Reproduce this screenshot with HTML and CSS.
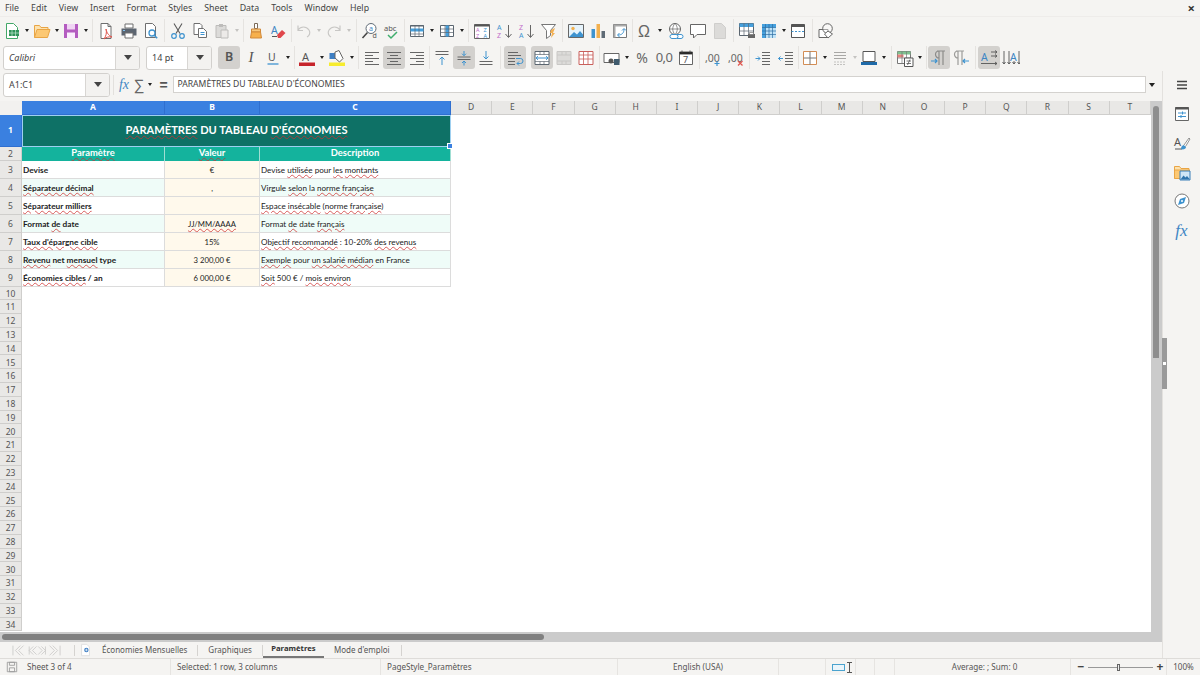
FILE: index.html
```html
<!DOCTYPE html>
<html lang="fr">
<head>
<meta charset="utf-8">
<title>Paramètres</title>
<link rel="stylesheet" href="styles.css">
</head>
<body>
<header class="menu">
  <span>File</span><span>Edit</span><span>View</span><span>Insert</span><span>Format</span><span>Styles</span><span>Sheet</span><span>Data</span><span>Tools</span><span>Window</span><span>Help</span>
  <span class="close">×</span>
</header>

<div class="tb">
  <span class="t"><svg viewBox="0 0 18 18"><path d="M3.5 1.5h7l4 4v11h-11z" fill="#fff" stroke="#43a868"/><path d="M6 8h10v6H6z" fill="#2f9259"/><path d="M9 8v6M12.5 8v6M6 11h10" stroke="#bfe6cd" stroke-width=".7"/></svg></span><span class="a"></span>
  <span class="t"><svg viewBox="0 0 18 18"><path d="M1.5 15.5v-12h5l1.500 2h7v2" fill="#fde2ae" stroke="#e9a545"/><path d="M1.500 15.500l2.500-8h13l-2.500 8z" fill="#fcc873" stroke="#e9a545"/></svg></span><span class="a a7"></span>
  <span class="t"><svg viewBox="0 0 18 18"><path d="M2 2h14v14H2z" fill="#b45cc0"/><path d="M5 2h8v5.500H5z" fill="#f0d5f4"/><path d="M5 10.500h8V16H5z" fill="#fbeefd"/></svg></span><span class="a"></span>
  <span class="sep s5"></span>
  <span class="t"><svg viewBox="0 0 18 18"><path d="M4 1.500h7l3 3v12H4z" fill="#fff" stroke="#6f6f6f"/><path d="M11 1.500v3h3" fill="none" stroke="#6f6f6f"/><path d="M9 7c1 4 2 6 6 8-3-.5-6 0-8 2 2-3 3-6 2-10z" fill="none" stroke="#e0554d"/></svg></span>
  <span class="t g1"><svg viewBox="0 0 18 18"><path d="M5 2h8v4H5z" fill="#fff" stroke="#6f6f6f"/><path d="M1.500 6.500h15v7h-15z" fill="#5c6570"/><path d="M5 11h8v5H5z" fill="#fff" stroke="#6f6f6f"/><path d="M3 8.500h2" stroke="#7fc1ee"/></svg></span>
  <span class="t"><svg viewBox="0 0 18 18"><path d="M3.500 1.500h7l3 3v11h-10z" fill="#fff" stroke="#6f6f6f"/><circle cx="10" cy="11" r="3" fill="#fff" stroke="#3e93cf" stroke-width="1.300"/><path d="M12.200 13.200l3 3" stroke="#3e93cf" stroke-width="1.500"/></svg></span>
  <span class="sep s5"></span>
  <span class="t"><svg viewBox="0 0 18 18"><path d="M5 1.500l6 10M13 1.500l-6 10" stroke="#5a5a5a" stroke-width="1.100"/><circle cx="5" cy="14" r="2.300" fill="none" stroke="#3e93cf" stroke-width="1.200"/><circle cx="13" cy="14" r="2.300" fill="none" stroke="#3e93cf" stroke-width="1.200"/></svg></span>
  <span class="t"><svg viewBox="0 0 18 18"><path d="M3 1.500h6l2 2v9H3z" fill="#fff" stroke="#6f6f6f"/><path d="M7.500 6.500h5l3 3v6h-8z" fill="#fff" stroke="#6f6f6f"/><path d="M9.500 10.500h4M9.500 12.500h4" stroke="#3e93cf"/></svg></span>
  <span class="t"><svg viewBox="0 0 18 18"><path d="M3 3.500h10v12H3z" fill="#dcdbd9" stroke="#bdbcba"/><path d="M6 2h4v3H6z" fill="#bdbcba"/><path d="M8 8h7v8H8z" fill="#eceae8" stroke="#bdbcba"/></svg></span><span class="a d"></span>
  <span class="sep s4"></span>
  <span class="t"><svg viewBox="0 0 18 18"><path d="M7.500 1.500h3v5h-3z" fill="#fff" stroke="#7a6a58"/><path d="M4.500 7h9v3h-9z" fill="#f7c77c" stroke="#d1893b"/><path d="M4.500 10h9l1 6h-11z" fill="#f6b04d" stroke="#d1893b"/></svg></span>
  <span class="t"><svg viewBox="0 0 18 18"><text x="2" y="12" class="svgt sb" fill="#3e86c4">A</text><path d="M3 14.500h5" stroke="#555"/><path d="M8 13l5-5 3.500 3-5 5H9z" fill="#e0474c"/></svg></span>
  <span class="sep s4"></span>
  <span class="t"><svg viewBox="0 0 18 18"><path d="M3 8c3-4 8-4 11 0 2 3 0 6-2 7M3 3.500V8.500h5" fill="none" stroke="#c8c7c5" stroke-width="1.200"/></svg></span><span class="a d"></span>
  <span class="t"><svg viewBox="0 0 18 18"><path d="M15 8c-3-4-8-4-11 0-2 3 0 6 2 7M15 3.500V8.500h-5" fill="none" stroke="#c8c7c5" stroke-width="1.200"/></svg></span><span class="a d"></span>
  <span class="sep s6"></span>
  <span class="t"><svg viewBox="0 0 18 18"><circle cx="10" cy="6.500" r="5" fill="#fff" stroke="#5f6b76"/><text x="8" y="9" class="svgt sx" fill="#3e86c4">a</text><path d="M6.500 10.500L1.500 16" stroke="#444" stroke-width="1.500"/><text x="11.500" y="16" class="svgt sx" fill="#555">d</text></svg></span>
  <span class="t"><svg viewBox="0 0 18 18"><text x="1" y="8.500" class="svgt sabc" fill="#555">abc</text><path d="M5 13l3 3 6-6" fill="none" stroke="#3fae6d" stroke-width="1.500"/></svg></span>
  <span class="sep s3"></span>
  <span class="t"><svg viewBox="0 0 18 18"><path d="M2.500 3.500h13v11h-13z" fill="#fff" stroke="#5b6670"/><path d="M2.500 6.500h13v3h-13z" fill="#46a0dd"/><path d="M2.500 3h13v1.500h-13z" fill="#5b6670"/><path d="M2.500 12h13M7 3.500v11M11 3.500v11" stroke="#5b6670" stroke-width=".7"/></svg></span><span class="a"></span>
  <span class="t"><svg viewBox="0 0 18 18"><path d="M2.500 3.500h13v11h-13z" fill="#fff" stroke="#5b6670"/><path d="M7.500 3.500h3.500v11H7.500z" fill="#46a0dd"/><path d="M2.500 7h13M2.500 10.500h13M7 3.500v11M11 3.500v11" stroke="#5b6670" stroke-width=".7"/></svg></span><span class="a"></span>
  <span class="sep s5"></span>
  <span class="t"><svg viewBox="0 0 18 18"><path d="M1.500 2.500h15v14h-15z" fill="#fff" stroke="#666"/><path d="M1.500 2.500h15v2h-15z" fill="#555"/><text x="3" y="10" class="svgt sxs" fill="#c06cc9">A</text><text x="10.500" y="10" class="svgt sxs" fill="#3e93cf">Z</text><text x="3" y="16" class="svgt sxs" fill="#c06cc9">Z</text><text x="10.500" y="16" class="svgt sxs" fill="#3e93cf">A</text></svg></span>
  <span class="t g1"><svg viewBox="0 0 18 18"><text x="1" y="8" class="svgt sx" fill="#3e93cf">A</text><text x="1" y="16" class="svgt sx" fill="#c06cc9">Z</text><path d="M12.500 3v12M9.500 12l3 3.500 3-3.500" fill="none" stroke="#666"/></svg></span>
  <span class="t"><svg viewBox="0 0 18 18"><text x="1" y="8" class="svgt sx" fill="#c06cc9">Z</text><text x="1" y="16" class="svgt sx" fill="#3e93cf">A</text><path d="M12.500 3v12M9.500 12l3 3.500 3-3.500" fill="none" stroke="#666"/></svg></span>
  <span class="t"><svg viewBox="0 0 18 18"><path d="M1.500 2.500h14l-5 6v5l-4 3v-8z" fill="#fff" stroke="#777"/><path d="M11 8l4-2-2 5 2 0-4 5 1-5h-2z" fill="#f3b052"/></svg></span>
  <span class="sep s5"></span>
  <span class="t"><svg viewBox="0 0 18 18"><path d="M1.500 2.500h15v13h-15z" fill="#e6f3fb" stroke="#666"/><circle cx="6" cy="6.500" r="1.700" fill="#f2b04e"/><path d="M2 15l5-5 3 2.500 3-3.500 3 3.500V15z" fill="#3e93cf"/></svg></span>
  <span class="t"><svg viewBox="0 0 18 18"><path d="M2.500 7h3.500v9H2.500z" fill="#3e93cf"/><path d="M7.500 2h3.500v14H7.500z" fill="#f2b04e"/><path d="M12.500 9h3.500v7h-3.500z" fill="#5e6a75"/></svg></span>
  <span class="t"><svg viewBox="0 0 18 18"><path d="M2.500 2.500h13v13h-13z" fill="#fff" stroke="#777"/><path d="M2.500 2.500h13v2h-13zM2.500 2.500h2v13h-2z" fill="#aaa"/><path d="M7 13c4 0 6-2 6-6M11 8.500l2-2 2 2M8.500 11l-2 2 2 2" fill="none" stroke="#3e93cf"/></svg></span>
  <span class="sep s3"></span>
  <span class="t"><svg viewBox="0 0 18 18"><text x="2" y="15" class="svgt so" fill="#666">Ω</text></svg></span><span class="a"></span>
  <span class="t g1"><svg viewBox="0 0 18 18"><circle cx="8" cy="7" r="5.500" fill="#fff" stroke="#666"/><path d="M2.500 7h11M8 1.500c-3 3-3 8 0 11M8 1.500c3 3 3 8 0 11" fill="none" stroke="#666" stroke-width=".7"/><path d="M5 12.500h4a2 2 0 0 1 0 4H5a2 2 0 0 1 0-4zM10 12.500h4a2 2 0 0 1 0 4h-4" fill="#fff" stroke="#3e93cf"/></svg></span>
  <span class="t"><svg viewBox="0 0 18 18"><path d="M1.500 2.500h15v10H8l-3.500 3.500v-3.500h-3z" fill="#fff" stroke="#666"/></svg></span>
  <span class="t"><svg viewBox="0 0 18 18"><path d="M3.500 1.500h7l4 4v11h-11z" fill="#dcdbd9" stroke="#cfcecc"/></svg></span>
  <span class="sep s5"></span>
  <span class="t"><svg viewBox="0 0 18 18"><path d="M1.500 1.500h14v12h-14z" fill="#fff" stroke="#5b6670"/><path d="M1.500 1.500h14v3.500h-14z" fill="#46a0dd"/><path d="M6 1.500v12M10.500 1.500v12M1.500 9h14" stroke="#5b6670" stroke-width=".7"/><path d="M10 12h7v4h-7z" fill="#666"/><path d="M11.500 10.500h4v2h-4z" fill="#fff" stroke="#666" stroke-width=".6"/></svg></span>
  <span class="t"><svg viewBox="0 0 18 18"><path d="M2 2h14v14H2z" fill="#46a0dd"/><path d="M5.500 5.500h10.500v10.500H5.500z" fill="#bfe2f7"/><path d="M2 5.500h14M5.500 2v14M2 9h14M2 12.500h14M9 2v14M12.500 2v14" stroke="#2c6ea3" stroke-width=".7"/></svg></span><span class="a a7"></span>
  <span class="t"><svg viewBox="0 0 18 18"><path d="M2.500 2.500h13v13h-13z" fill="#fff" stroke="#555"/><path d="M2.500 2.500h13v2.500h-13z" fill="#555"/><path d="M2.500 9.500h13" stroke="#3e93cf" stroke-dasharray="2 1.500"/></svg></span>
  <span class="sep s6"></span>
  <span class="t"><svg viewBox="0 0 18 18"><path d="M2 7.500h9v8H2z" fill="#fff" stroke="#666"/><circle cx="10.500" cy="6.500" r="4.800" fill="#fff" fill-opacity=".4" stroke="#666"/><path d="M11 9l4.500 3-4.500 4-3.500-4z" fill="#fff" stroke="#666"/></svg></span>
</div>

<div class="tb">
  <span class="combo font"><span class="val fi">Calibri</span><span class="drop"></span></span>
  <span class="combo size"><span class="val">14 pt</span><span class="drop"></span></span>
  <span class="t on"><b class="tx bold">B</b></span>
  <span class="t"><i class="tx ital">I</i></span>
  <span class="t"><svg viewBox="0 0 18 18"><text x="4" y="12" class="svgt sb" fill="#555">U</text><path d="M3.500 15h11" stroke="#3e93cf" stroke-width="1.300"/></svg></span><span class="a"></span>
  <span class="sep s4"></span>
  <span class="t"><svg viewBox="0 0 18 18"><text x="4" y="12" class="svgt sl" fill="#555">A</text><path d="M1 13.500h16v3.500H1z" fill="#c6242b"/></svg></span><span class="a"></span>
  <span class="t"><svg viewBox="0 0 18 18"><path d="M1 13.500h16v3.500H1z" fill="#f7ec2e"/><path d="M1.500 4h6v6h-6z" fill="#3e7fc4"/><path d="M7 3l4-1.500 4 8-3.500 3.500L7 9z" fill="#fff" stroke="#666"/></svg></span><span class="a"></span>
  <span class="sep s5"></span>
  <span class="t"><svg viewBox="0 0 18 18"><path d="M2 3.500h14M2 6.500h8M2 9.500h14M2 12.500h8M2 15.500h14" stroke="#666"/></svg></span>
  <span class="t on"><svg viewBox="0 0 18 18"><path d="M2 3.500h14M5 6.500h8M2 9.500h14M5 12.500h8M2 15.500h14" stroke="#666"/></svg></span>
  <span class="t g1"><svg viewBox="0 0 18 18"><path d="M2 3.500h14M8 6.500h8M2 9.500h14M8 12.500h8M2 15.500h14" stroke="#666"/></svg></span>
  <span class="sep s3"></span>
  <span class="t"><svg viewBox="0 0 18 18"><path d="M2.500 2.500h13M2.500 5.500h13" stroke="#666"/><path d="M9 16V8M6.500 10.500L9 8l2.500 2.500" fill="none" stroke="#3e93cf"/></svg></span>
  <span class="t on"><svg viewBox="0 0 18 18"><path d="M2.500 8h13M2.500 10.500h13" stroke="#666"/><path d="M9 2v4.500M7 4.700l2 2 2-2M9 16.500V12M7 14l2-2 2 2" fill="none" stroke="#3e93cf"/></svg></span>
  <span class="t"><svg viewBox="0 0 18 18"><path d="M2.500 12.500h13M2.500 15.500h13" stroke="#666"/><path d="M9 2v8M6.500 7.500L9 10l2.500-2.500" fill="none" stroke="#3e93cf"/></svg></span>
  <span class="sep s6"></span>
  <span class="t on g1"><svg viewBox="0 0 18 18"><path d="M2 3.500h10M2 6.500h13M2 9.500h7M2 12.500h7M2 15.500h7" stroke="#666"/><path d="M10 9.500h4.500a1.500 1.500 0 0 1 0 5H11M13 12.500l-2 2 2 2" fill="none" stroke="#3e93cf"/></svg></span>
  <span class="t g5 on"><svg viewBox="0 0 18 18"><path d="M2 2.500h14v13H2z" fill="#fff" stroke="#5b6670"/><path d="M2 5.500h14M2 12.500h14M7 2.500v3M11 2.500v3M7 12.500v3M11 12.500v3" stroke="#5b6670" stroke-width=".7"/><path d="M3 9h12M3 9l2-1.800M3 9l2 1.800M15 9l-2-1.800M15 9l-2 1.800" fill="none" stroke="#3e93cf"/></svg></span>
  <span class="t"><svg viewBox="0 0 18 18"><path d="M2 2.500h14v13H2z" fill="#dcdbd9" stroke="#c9c8c6"/><path d="M2 6h14M2 12h14M7 2.500v3.500M11 2.500v3.500M7 12v3.500M11 12v3.500" stroke="#c9c8c6"/></svg></span>
  <span class="t"><svg viewBox="0 0 18 18"><path d="M2 2.500h14v13H2z" fill="#fff" stroke="#c9605c"/><path d="M2 6h14M2 10h14M6.500 2.500v13M11 2.500v13" stroke="#c9605c" stroke-width=".8"/></svg></span>
  <span class="sep s4"></span>
  <span class="t"><svg viewBox="0 0 18 18"><path d="M1 4.500h15v9H1z" fill="#fff" stroke="#666"/><circle cx="8" cy="12" r="2.500" fill="#555"/><path d="M11 10h5.500v6H11z" fill="#3f5a6d"/></svg></span><span class="a"></span>
  <span class="t"><span class="tx pct">%</span></span>
  <span class="t"><span class="tx num">0,0</span></span>
  <span class="t"><svg viewBox="0 0 18 18"><path d="M2.500 3.500h13v12h-13z" fill="#fff" stroke="#666"/><path d="M2.500 3h13v2h-13zM5 1.500v2M13 1.500v2" stroke="#555"/><text x="6" y="14" class="svgt sm" fill="#555">7</text></svg></span>
  <span class="sep s5"></span>
  <span class="t"><svg viewBox="0 0 18 18"><text x="1" y="12.500" class="svgt sm2" fill="#666">,00</text><path d="M13 12v5M10.500 14.500h5" stroke="#3e93cf" stroke-width="1.200"/></svg></span>
  <span class="t g1"><svg viewBox="0 0 18 18"><text x="1" y="12.500" class="svgt sm2" fill="#666">,00</text><path d="M11 12l4.500 4.500M15.500 12L11 16.500" stroke="#e0554d" stroke-width="1.200"/></svg></span>
  <span class="sep s5"></span>
  <span class="t"><svg viewBox="0 0 18 18"><path d="M8 3.500h8M8 6.500h8M8 9.500h8M8 12.500h8M8 15.500h8" stroke="#666"/><path d="M1.500 9.500H6M4 7.500l2 2-2 2" fill="none" stroke="#3e93cf"/></svg></span>
  <span class="t g1"><svg viewBox="0 0 18 18"><path d="M8 3.500h8M8 6.500h8M8 9.500h8M8 12.500h8M8 15.500h8" stroke="#666"/><path d="M6 9.500H1.500M3.500 7.500l-2 2 2 2" fill="none" stroke="#3e93cf"/></svg></span>
  <span class="sep s2"></span>
  <span class="t"><svg viewBox="0 0 18 18"><path d="M2.500 2.500h13v13h-13z" fill="#fff" stroke="#d28d55"/><path d="M9 2.500v13M2.500 9h13" stroke="#777"/></svg></span><span class="a"></span>
  <span class="t"><svg viewBox="0 0 18 18"><path d="M3 3.500h12M3 6.500h12M3 9.500h12" stroke="#a8a7a5"/><path d="M3 13h12M3 15.500h12" stroke="#c3c2c0" stroke-dasharray="2 1"/></svg></span><span class="a d"></span>
  <span class="t g-1"><svg viewBox="0 0 18 18"><path d="M3 2.500h12v10H3z" fill="#fff" stroke="#555"/><path d="M1 13h16v3H1z" fill="#1f6aa8"/></svg></span><span class="a"></span>
  <span class="sep s6"></span>
  <span class="t"><svg viewBox="0 0 18 18"><path d="M1.500 2.500h13v12h-13z" fill="#fff" stroke="#777"/><path d="M1.500 2.500h13v3h-13z" fill="#7fc18f"/><path d="M1.500 5.500h6v3h-6z" fill="#e9807c"/><path d="M6 2.500v12M10.500 2.500v12M1.500 9h13" stroke="#777" stroke-width=".7"/><path d="M8.500 9h8.500v8.500H8.500z" fill="#fff" stroke="#555"/><path d="M10.500 12h4.500M10.500 14.500h4.500M14 10.500l-2.500 5.500" stroke="#555" stroke-width=".8"/></svg></span><span class="a"></span>
  <span class="sep s4"></span>
  <span class="t on"><svg viewBox="0 0 18 18"><path d="M9 2v14M13 2v14M7 2h8M9 2a3.500 3.500 0 0 0 0 7" fill="none" stroke="#8c8b89" stroke-width="1.200"/><path d="M1 12h6M5 10l2 2-2 2" fill="none" stroke="#3e93cf" stroke-width="1.200"/></svg></span>
  <span class="t"><svg viewBox="0 0 18 18"><path d="M6 2v14M10 2v14M4 2h8M6 2a3.500 3.500 0 0 0 0 7" fill="none" stroke="#9c9b99" stroke-width="1.200"/><path d="M17 12h-6M13 10l-2 2 2 2" fill="none" stroke="#3e93cf" stroke-width="1.200"/></svg></span>
  <span class="sep s6"></span>
  <span class="t on"><svg viewBox="0 0 18 18"><text x="1" y="11.500" class="svgt sb" fill="#3e86c4">A</text><path d="M11 3h6M11 7h6M15 1.500L17 3l-2 1.500M15 5.500L17 7l-2 1.500M1 14.500h16M15 13l2 1.500-2 1.500" fill="none" stroke="#555" stroke-width=".9"/></svg></span>
  <span class="t"><svg viewBox="0 0 18 18"><text x="8" y="11.500" class="svgt sb" fill="#3e86c4">A</text><path d="M2 2v13M7 2v13M12 12v3M17 2v13M.5 13L2 15l1.500-2M5.500 13L7 15l1.500-2M10.500 13l1.500 2 1.500-2M15.500 13l1.500 2 1.500-2" fill="none" stroke="#555" stroke-width=".9"/></svg></span>
</div>

<div class="work">
  <main class="main">
    <div class="fbar">
      <span class="combo name"><span class="val">A1:C1</span><span class="drop"></span></span>
      <span class="fsep"></span>
      <span class="fx">fx</span>
      <span class="sigma">∑</span><span class="a"></span>
      <span class="eq">=</span>
      <span class="input">PARAMÈTRES DU TABLEAU D'ÉCONOMIES</span>
      <span class="a fdrop"></span>
    </div>

    <div class="sheet">
      <div class="grid">
        <div class="corner"></div>
        <div class="ch sel">A</div><div class="ch sel">B</div><div class="ch sel">C</div>
        <div class="ch">D</div><div class="ch">E</div><div class="ch">F</div><div class="ch">G</div><div class="ch">H</div><div class="ch">I</div><div class="ch">J</div><div class="ch">K</div><div class="ch">L</div><div class="ch">M</div><div class="ch">N</div><div class="ch">O</div><div class="ch">P</div><div class="ch">Q</div><div class="ch">R</div><div class="ch">S</div><div class="ch">T</div>

        <div class="rh sel">1</div>
        <div class="title"><span class="w">PARAMÈTRES</span> DU TABLEAU <span class="w">D'ÉCONOMIES</span></div>

        <div class="rh">2</div>
        <div class="hd"><span class="w">Paramètre</span></div><div class="hd"><span class="w">Valeur</span></div><div class="hd">Description</div>

        <div class="rh">3</div>
        <div class="c k">Devise</div><div class="c v">€</div><div class="c d">Devise <span class="w">utilisée</span> pour <span class="w">les</span> <span class="w">montants</span></div>
        <div class="rh">4</div>
        <div class="c k z"><span class="w">Séparateur décimal</span></div><div class="c v">,</div><div class="c d z">Virgule <span class="w">selon</span> la <span class="w">norme française</span></div>
        <div class="rh">5</div>
        <div class="c k"><span class="w">Séparateur milliers</span></div><div class="c v"></div><div class="c d"><span class="w">Espace insécable</span> (<span class="w">norme française</span>)</div>
        <div class="rh">6</div>
        <div class="c k z">Format <span class="w">de</span> date</div><div class="c v"><span class="w">JJ/MM/AAAA</span></div><div class="c d z">Format <span class="w">de</span> date <span class="w">français</span></div>
        <div class="rh">7</div>
        <div class="c k"><span class="w">Taux d'épargne cible</span></div><div class="c v">15%</div><div class="c d"><span class="w">Objectif recommandé</span> : 10-20% <span class="w">des revenus</span></div>
        <div class="rh">8</div>
        <div class="c k z"><span class="w">Revenu</span> net <span class="w">mensuel</span> type</div><div class="c v">3 200,00 €</div><div class="c d z"><span class="w">Exemple</span> pour <span class="w">un salarié médian</span> en France</div>
        <div class="rh">9</div>
        <div class="c k"><span class="w">Économies cibles</span> / an</div><div class="c v">6 000,00 €</div><div class="c d"><span class="w">Soit</span> 500 € / <span class="w">mois environ</span></div>

        <div class="rh">10</div><div class="rh">11</div><div class="rh">12</div><div class="rh">13</div><div class="rh">14</div><div class="rh">15</div><div class="rh">16</div><div class="rh">17</div><div class="rh">18</div><div class="rh">19</div><div class="rh">20</div><div class="rh">21</div><div class="rh">22</div><div class="rh">23</div><div class="rh">24</div><div class="rh">25</div><div class="rh">26</div><div class="rh">27</div><div class="rh">28</div><div class="rh">29</div><div class="rh">30</div><div class="rh">31</div><div class="rh">32</div><div class="rh">33</div><div class="rh">34</div>
      </div>
      <div class="vscroll"><div class="vthumb"></div></div>
    </div>

    <div class="hscroll"><div class="hthumb"></div></div>

    <div class="tabs">
      <svg class="nav" viewBox="0 0 60 16"><g fill="none" stroke="#c9c8c6"><path d="M1 2v12M10 2L4 8l6 6M14 2L8 8l6 6M26 3l-5 5 5 5M21 3v10M30 3l-5 5 5 5M36 3l5 5-5 5M41 3v10M32 3l5 5-5 5M46 2l6 6-6 6M50 2l6 6-6 6M59 2v12"/></g></svg>
      <span class="tsep first"></span>
      <svg class="addtab" viewBox="0 0 10 16"><path d="M.5 1.500h6l3 3v10h-9z" fill="#fff" stroke="#ddd"/><circle cx="6" cy="8" r="2.500" fill="#3e7fc4"/><path d="M4.500 8h3M6 6.500v3" stroke="#fff" stroke-width=".8"/></svg>
      <span class="tab tab1">Économies Mensuelles</span><span class="tsep"></span>
      <span class="tab tab2">Graphiques</span><span class="tsep"></span>
      <span class="tab cur">Paramètres</span>
      <span class="tab tab4">Mode d'emploi</span><span class="tsep"></span>
    </div>
  </main>

  <aside class="side">
    <svg class="hamb" viewBox="0 0 12 12"><path d="M1 2.500h10M1 6h10M1 9.500h10" stroke="#444" stroke-width="1.300"/></svg>
    <svg viewBox="0 0 18 18"><path d="M2.500 2.500h13v13h-13z" fill="#fff" stroke="#666"/><path d="M2.500 2h13v2.500h-13z" fill="#555"/><path d="M5 8h8M5 11.500h8" stroke="#3e93cf"/><path d="M9.500 6.500v3M8 10v3" stroke="#3e93cf"/></svg>
    <svg viewBox="0 0 18 18"><text x="1" y="12" class="svgt sl" fill="#555">A</text><path d="M2 15h7" stroke="#555"/><path d="M8 15c0-3 2-4 3-4l2 2c0 2-3 3-5 2z" fill="#3e93cf"/><path d="M11 11l5-7 1 1-4.500 7.500" fill="#fff" stroke="#666" stroke-width=".7"/></svg>
    <svg viewBox="0 0 18 18"><path d="M1.500 15.500v-12h5l1.500 2h8v2" fill="#fde2ae" stroke="#e9a545"/><path d="M1.500 15.500V7h15v8.500z" fill="#fcc873" stroke="#e9a545"/><path d="M7 8h10v9H7z" fill="#cfe6f6" stroke="#3a7fb8"/><path d="M7.500 16.500l3-4 2 2 1.500-1.500 3 3.500z" fill="#2f75ad"/></svg>
    <svg viewBox="0 0 18 18"><circle cx="9" cy="9" r="7" fill="#fff" stroke="#777"/><path d="M13 5l-2 6-6 2 2-6z" fill="#3e93cf"/><circle cx="9" cy="9" r="1" fill="#fff"/></svg>
    <span class="sfx">fx</span>
    <span class="collapse"></span>
  </aside>
</div>

<footer class="status">
  <span class="st s1"><svg viewBox="0 0 14 14"><path d="M1.500 1.500h11v11h-11z" fill="none" stroke="#999"/><path d="M4 1.500h6v3.500H4zM4 8h6v4.500H4z" fill="none" stroke="#999"/></svg>Sheet 3 of 4</span>
  <span class="st s2x">Selected: 1 row, 3 columns</span>
  <span class="st s3x">PageStyle_Paramètres</span>
  <span class="st s4x">English (USA)</span>
  <span class="st s5a"></span>
  <span class="st s5x"><span class="selrect"></span><span class="ibeam"></span></span>
  <span class="st s6x"></span>
  <span class="st s7x"></span>
  <span class="st s8x">Average: ; Sum: 0</span>
  <span class="st s9x"><span class="zm">−</span><span class="slider"><span class="knob"></span></span><span class="zm">+</span></span>
  <span class="st s10x">100%</span>
</footer>
</body>
</html>
```

FILE: styles.css
```css
* { box-sizing: border-box; }
html, body { margin: 0; height: 675px; overflow: hidden; }
body {
  width: 1200px;
  display: flex;
  flex-direction: column;
  background: #f5f4f2;
  color: #3d3d3d;
  font: 8.100px/1 "Noto Sans", sans-serif;
}

/* menu */
.menu {
  height: 17px;
  flex: none;
  display: flex;
  align-items: center;
  gap: 12px;
  padding: 0 5px;
  font-size: 8.800px;
  color: #444;
  position: relative;
  border-bottom: 1px solid #eeecea;
}
.close { margin-left: auto; font-size: 13px; font-weight: 700; color: #333; }

/* toolbars */
.tb {
  height: 27px;
  flex: none;
  display: flex;
  align-items: center;
  padding-left: 1px;
}
.tb + .tb { padding-left: 3px; }
.t {
  width: 22px;
  height: 23px;
  flex: none;
  display: flex;
  align-items: center;
  justify-content: center;
  border-radius: 3px;
}
.t svg { width: 18px; height: 18px; display: block; }
.on { background: #d3d1ce; }
.g1 { margin-left: 1px; }
.g5 { margin-left: 5px; }
.g-1 { margin-left: -1px; }
.a {
  width: 8px;
  height: 10px;
  flex: none;
  display: flex;
  align-items: center;
  justify-content: center;
}
.a::before {
  content: "";
  border-left: 2.5px solid transparent;
  border-right: 2.5px solid transparent;
  border-top: 3px solid #222;
}
.a.d::before { border-top-color: #c4c3c1; }
.a7 { width: 7px; }
.sep { flex: none; display: flex; justify-content: center; height: 23px; }
.sep::before { content: ""; width: 1px; background: #e5e3e0; }
.s2 { width: 2px; }
.s3 { width: 3px; }
.s4 { width: 4px; }
.s5 { width: 5px; }
.s6 { width: 6px; }
.svgt { font-family: "Noto Sans", sans-serif; }
.sb { font-size: 10.500px; }
.sl { font-size: 11px; }
.sm { font-size: 9px; }
.sm2 { font-size: 10.500px; }
.sabc { font-size: 7.500px; }
.sx { font-size: 7px; }
.sxs { font-size: 5.500px; }
.so { font-size: 16px; font-family: "Liberation Sans", sans-serif; }
.tx { color: #555; font-size: 14px; }
.bold { font-family: "Noto Sans", sans-serif; font-weight: 600; font-size: 12.500px; }
.ital { font-family: "Liberation Serif", serif; font-size: 15px; }
.pct { font-size: 14px; color: #666; }
.num { font-size: 13px; color: #666; letter-spacing: -.6px; }

/* combo boxes */
.combo {
  flex: none;
  display: flex;
  height: 24px;
  background: #fff;
  border: 1px solid #d2d0cd;
  border-radius: 3px;
  overflow: hidden;
}
.font { width: 137px; margin-right: 6px; }
.size { width: 66px; margin-right: 6px; }
.name { width: 107px; margin-left: 3px; }
.val {
  flex: 1;
  display: flex;
  align-items: center;
  padding-left: 5px;
  font-size: 9px;
  color: #444;
}
.fi { font-style: italic; }
.drop {
  width: 24px;
  flex: none;
  background: #f3f2f0;
  border-left: 1px solid #d8d6d3;
  display: flex;
  align-items: center;
  justify-content: center;
}
.drop::before {
  content: "";
  border-left: 4.5px solid transparent;
  border-right: 4.5px solid transparent;
  border-top: 5px solid #444;
}

/* work area */
.work { flex: 1; display: flex; min-height: 0; }
.main { width: 1162px; flex: none; display: flex; flex-direction: column; }

/* formula bar */
.fbar { height: 27px; flex: none; display: flex; align-items: center; }
.fsep { width: 1px; height: 20px; background: #e2e0dd; margin: 0 3px 0 3px; }
.fx { width: 14px; font: italic 14px "Liberation Serif", serif; color: #3e86c4; text-align: center; }
.sigma { width: 14px; margin-left: 1px; font: 15px "Liberation Sans", sans-serif; color: #666; text-align: center; }
.eq { width: 13px; margin-left: 3px; font: 700 14px "Liberation Sans", sans-serif; color: #555; text-align: center; }
.input {
  width: 973px;
  height: 17px;
  margin-left: 3px;
  flex: none;
  display: flex;
  align-items: center;
  padding-left: 3.500px;
  background: #fff;
  border: 1px solid #d4d2cf;
  font-size: 8.600px;
  color: #444;
}
.fdrop { margin-left: 2px; }
.fdrop::before { border-left-width: 3.500px; border-right-width: 3.500px; border-top-width: 4px; }

/* sheet */
.sheet { height: 531.500px; flex: none; margin-top: 2.500px; display: flex; }
.grid {
  width: 1151px;
  flex: none;
  background: #fff;
  display: grid;
  grid-template-columns: 22px 143px 95px 191px repeat(17, 41.18px);
  grid-template-rows: 14px 32px 14px repeat(7, 18px) repeat(25, 13.8px);
  align-content: start;
  font-family: Lato, sans-serif;
}
.corner { background: #f2f1ef; }
.ch, .rh {
  display: flex;
  align-items: center;
  justify-content: center;
  padding-top: 1px;
  font-family: "Noto Sans", sans-serif;
  font-size: 8.500px;
  color: #555;
  background: #e9e8e6;
  border-right: 1px solid #cfcecc;
  border-bottom: 1px solid #cfcecc;
}
.rh { grid-column: 1; padding-top: 2px; }
.ch.sel, .rh.sel {
  background: #3a80e0;
  color: #fff;
  font-weight: 700;
  border-color: #2f6fd0;
}
.rh.sel { padding-top: 0; }
.title {
  grid-column: 2 / 5;
  position: relative;
  text-align: center;
  line-height: 27px;
  background: #0e7166;
  color: #fff;
  font-size: 11.100px;
  font-weight: 700;
  border: 1px solid #9fd0f0;
}
.title::after {
  content: "";
  position: absolute;
  right: -3px;
  bottom: -3px;
  width: 4px;
  height: 4px;
  background: #3a80e0;
  border: 1px solid #fff;
}
.hd {
  display: flex;
  align-items: center;
  justify-content: center;
  padding-bottom: 1px;
  background: #14b39d;
  color: #fff;
  font-size: 9.400px;
  font-weight: 700;
  border-right: 1px solid #9fded3;
}
.c {
  line-height: 18px;
  white-space: nowrap;
  font-size: 8.080px;
  color: #222;
  border-right: 1px solid #dcdcdc;
  border-bottom: 1px solid #dcdcdc;
  padding-left: 1px;
  background: #fff;
}
.k { font-weight: 700; font-size: 8.300px; color: #1c1c1c; }
.v { text-align: center; background: #fff9ec; font-size: 7.700px; padding-left: 0; }
.z { background: #effcf8; }
.w {
  text-decoration: underline wavy rgba(205, 45, 45, .75);
  text-decoration-thickness: .5px;
  text-underline-offset: .5px;
}

/* scrollbars */
.vscroll { width: 11px; flex: none; background: #cbcbcb; padding: 5px 2px 0; }
.vthumb { width: 6px; height: 252px; background: #8e8e8e; border-radius: 3px 3px 0 0; }
.hscroll { height: 10px; flex: none; background: #cbcbcb; padding: 2px; }
.hthumb { width: 542px; height: 6px; background: #808080; border-radius: 3px; }

/* tabs */
.tabs {
  height: 16px;
  flex: none;
  display: flex;
  align-items: center;
  font-size: 8px;
  color: #555;
  padding-left: 7px;
}
.nav { width: 59px; height: 13px; flex: none; }
.addtab { width: 9px; height: 14px; flex: none; margin-left: 3px; }
.tsep { width: 1px; height: 11px; background: #d5d3d0; flex: none; }
.tsep.first { margin-left: 8px; margin-right: 3px; }
.tab { white-space: nowrap; }
.tab1 { margin-left: 12px; margin-right: 10px; }
.tab2 { margin-left: 10px; margin-right: 10px; }
.cur {
  width: 61px;
  height: 16px;
  display: flex;
  align-items: center;
  justify-content: center;
  font-size: 7.700px;
  font-weight: 700;
  color: #333;
  border-bottom: 2px solid #777;
}
.tab4 { margin-left: 10px; margin-right: 11px; }

/* sidebar */
.side {
  flex: 1;
  position: relative;
  display: flex;
  flex-direction: column;
  align-items: center;
  gap: 11px;
  padding-top: 8px;
  border-left: 1px solid #e3e1de;
}
.side svg { width: 18px; height: 18px; flex: none; }
.side .hamb { width: 12px; height: 12px; margin-bottom: 3px; }
.sfx { font: italic 17px "Liberation Serif", serif; color: #3e86c4; }
.collapse {
  position: absolute;
  left: -1px;
  top: 267px;
  width: 5px;
  height: 51px;
  background: #9a9a9a;
}
.collapse::after {
  content: "";
  position: absolute;
  left: 1px;
  top: 24px;
  width: 3px;
  height: 3px;
  background: #fff;
}

/* status bar */
.status {
  height: 17px;
  flex: none;
  display: flex;
  align-items: center;
  font-size: 8.100px;
  color: #555;
  border-top: 1px solid #dedcd9;
}
.st {
  flex: none;
  height: 100%;
  display: flex;
  align-items: center;
  border-right: 1px solid #e6e4e1;
}
.s1 { width: 171px; padding-left: 6px; gap: 9px; }
.s1 svg { width: 12px; height: 12px; }
.s2x { width: 210px; padding-left: 6px; }
.s3x { width: 237px; padding-left: 6px; }
.s4x { width: 161px; justify-content: center; }
.s5a { width: 47px; }
.s5x { width: 30px; padding-left: 6px; gap: 2px; }
.selrect { width: 13px; height: 7px; border: 1px solid #4aa3cf; background: #eaf5fb; }
.ibeam { width: 5px; height: 11px; border-top: 1px solid #555; border-bottom: 1px solid #555; position: relative; }
.ibeam::before { content: ""; position: absolute; left: 2px; top: 0; bottom: 0; width: 1px; background: #555; }
.s6x { width: 19px; }
.s7x { width: 20px; }
.s8x { width: 176px; justify-content: center; padding-left: 4px; }
.s9x { width: 96px; padding-left: 6px; gap: 3px; }
.zm { width: 8px; font-size: 12px; font-weight: 700; color: #444; text-align: center; }
.slider { position: relative; width: 65px; height: 1px; background: #999; }
.knob { position: absolute; left: 29px; top: -3px; width: 3px; height: 7px; background: #eee; border: 1px solid #666; }
.s10x { flex: 1; justify-content: center; border-right: 0; }
```
